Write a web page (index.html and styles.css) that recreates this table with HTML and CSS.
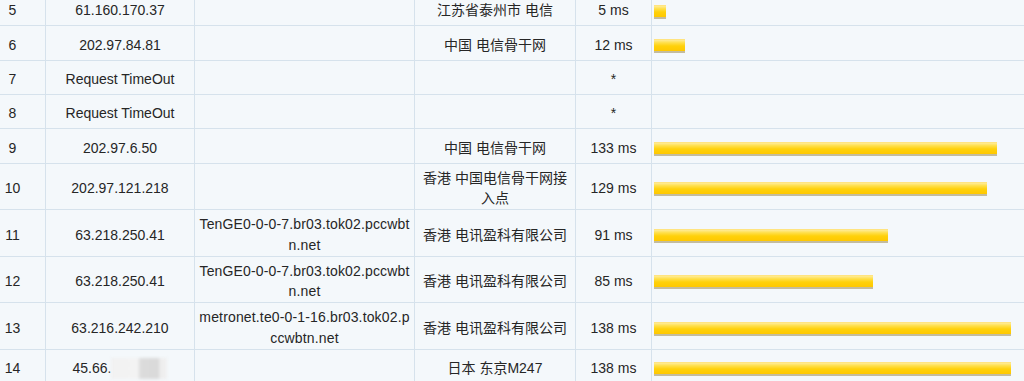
FILE: index.html
```html
<!DOCTYPE html>
<html lang="zh-CN">
<head>
<meta charset="utf-8">
<title>Traceroute</title>
<link rel="stylesheet" href="styles.css">
</head>
<body>
<table class="trace">
  <colgroup>
    <col class="c-hop"><col class="c-ip"><col class="c-host"><col class="c-loc"><col class="c-time"><col class="c-bar">
  </colgroup>
  <tbody>
    <tr><td>5</td><td>61.160.170.37</td><td class="host"></td><td>江苏省泰州市 电信</td><td>5 ms</td><td class="bar-cell"><span class="bar" style="width:12px"></span></td></tr>
    <tr><td>6</td><td>202.97.84.81</td><td class="host"></td><td>中国 电信骨干网</td><td>12 ms</td><td class="bar-cell"><span class="bar" style="width:31px"></span></td></tr>
    <tr><td>7</td><td>Request TimeOut</td><td class="host"></td><td></td><td>*</td><td class="bar-cell"></td></tr>
    <tr><td>8</td><td>Request TimeOut</td><td class="host"></td><td></td><td>*</td><td class="bar-cell"></td></tr>
    <tr><td>9</td><td>202.97.6.50</td><td class="host"></td><td>中国 电信骨干网</td><td>133 ms</td><td class="bar-cell"><span class="bar" style="width:343px"></span></td></tr>
    <tr><td>10</td><td>202.97.121.218</td><td class="host"></td><td>香港 中国电信骨干网接入点</td><td>129 ms</td><td class="bar-cell"><span class="bar" style="width:333px"></span></td></tr>
    <tr><td>11</td><td>63.218.250.41</td><td class="host">TenGE0-0-0-7.br03.tok02.pccwbtn.net</td><td>香港 电讯盈科有限公司</td><td>91 ms</td><td class="bar-cell"><span class="bar" style="width:234px"></span></td></tr>
    <tr><td>12</td><td>63.218.250.41</td><td class="host">TenGE0-0-0-7.br03.tok02.pccwbtn.net</td><td>香港 电讯盈科有限公司</td><td>85 ms</td><td class="bar-cell"><span class="bar" style="width:219px"></span></td></tr>
    <tr><td>13</td><td>63.216.242.210</td><td class="host">metronet.te0-0-1-16.br03.tok02.pccwbtn.net</td><td>香港 电讯盈科有限公司</td><td>138 ms</td><td class="bar-cell"><span class="bar" style="width:357px"></span></td></tr>
    <tr><td>14</td><td>45.66.<span class="mask"></span></td><td class="host"></td><td>日本 东京M247</td><td>138 ms</td><td class="bar-cell"><span class="bar" style="width:357px"></span></td></tr>
  </tbody>
</table>
</body>
</html>
```

FILE: styles.css
```css
html, body {
  margin: 0;
  padding: 0;
  background: #f4f8fb;
  overflow: hidden;
}

.trace {
  border-collapse: collapse;
  table-layout: fixed;
  width: 1072px;
  margin: -9px 0 0 -21px;
  font-family: "Liberation Sans", "Noto Sans CJK SC", sans-serif;
  font-size: 14px;
  line-height: 20.75px;
  color: #262626;
  background: #f4f8fb;
}

.c-hop { width: 66px; }
.c-ip { width: 149px; }
.c-host { width: 220px; }
.c-loc { width: 161px; }
.c-time { width: 76px; }
.c-bar { width: 400px; }

.trace tr {
  height: 34.33px;
}

.trace td {
  border: 1px solid #d6e2ec;
  padding: 4px 4px 0;
  text-align: center;
  vertical-align: middle;
}

.trace td.host {
  word-break: break-all;
  padding-left: 3.5px;
  padding-right: 3.5px;
  letter-spacing: 0.15px;
}

.trace td.bar-cell {
  text-align: left;
  padding-left: 2px;
}

.bar {
  display: inline-block;
  height: 11px;
  vertical-align: middle;
  background: linear-gradient(to bottom, #ffec96 0%, #ffdf4a 25%, #ffd10a 55%, #ffc800 100%);
  border-top: 1px solid #ffe480;
  box-shadow: 0 2px 0 0 #c4bc9e;
  margin-top: -2px;
}

.mask {
  display: inline-block;
  width: 56px;
  height: 21px;
  vertical-align: middle;
  background: linear-gradient(to right, #f1f1f1 0, #f3f3f3 48%, #dcdcdc 52%, #d9d9d9 84%, #eeeeee 88%, #f0f0f0 100%);
  filter: blur(1.5px);
  margin-top: -2px;
}
```
